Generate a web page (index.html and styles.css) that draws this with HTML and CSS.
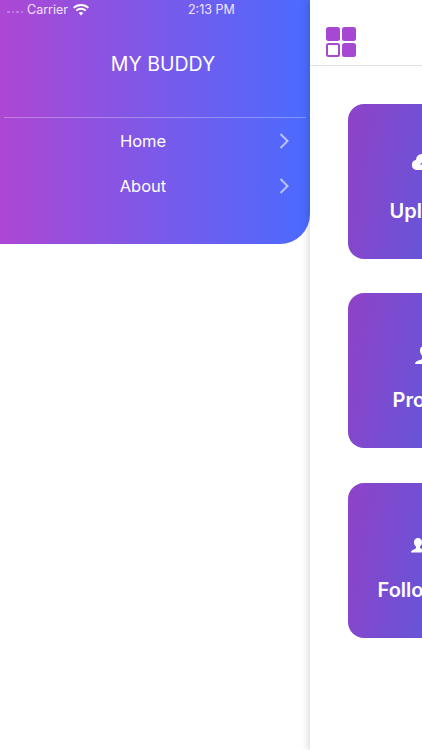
FILE: index.html
```html
<!DOCTYPE html>
<html lang="en">
<head>
<meta charset="utf-8">
<title>My Buddy</title>
<link rel="stylesheet" href="styles.css">
</head>
<body>
<div class="screen">
  <aside class="drawer">
    <div class="menu">
      <div class="status">
        <span class="signal"><i></i><i></i><i></i><i></i></span>
        <span class="carrier">Carrier</span>
        <svg class="wifi" width="16" height="12" viewBox="0 0 16 12"><path fill="#fff" d="M8 11.600 5.700 9.100a3.300 3.300 0 0 1 4.600 0zM3.900 7.300 2.600 5.900a7.800 7.800 0 0 1 10.800 0l-1.300 1.400a5.900 5.900 0 0 0-8.200 0zM1.300 4.600 0 3.200a11.600 11.600 0 0 1 16 0l-1.300 1.400a9.700 9.700 0 0 0-13.400 0z"/></svg>
        <span class="time">2:13 PM</span>
      </div>
      <h1 class="brand">MY BUDDY</h1>
      <div class="rule"></div>
      <a class="item"><span>Home</span><svg class="chev" width="10" height="16" viewBox="0 0 10 16"><path d="M1.500 1 8.500 8l-7 7" fill="none" stroke="#fff" stroke-opacity=".6" stroke-width="2"/></svg></a>
      <a class="item"><span>About</span><svg class="chev" width="10" height="16" viewBox="0 0 10 16"><path d="M1.500 1 8.500 8l-7 7" fill="none" stroke="#fff" stroke-opacity=".6" stroke-width="2"/></svg></a>
    </div>
  </aside>
  <main class="panel">
    <header class="topbar">
      <svg width="32" height="32" viewBox="0 0 32 32">
        <rect x="1" y="1" width="14" height="14" rx="2.500" fill="#a748d2"/>
        <rect x="17" y="1" width="14" height="14" rx="2.500" fill="#a748d2"/>
        <rect x="2" y="18" width="12" height="12" rx="1.500" fill="#fff" stroke="#a748d2" stroke-width="2"/>
        <rect x="17" y="17" width="14" height="14" rx="2.500" fill="#a748d2"/>
      </svg>
    </header>
    <div class="cards">
      <section class="card">
        <svg class="icon" width="26" height="20" viewBox="0 0 26 20"><path fill="#fff" fill-rule="evenodd" d="M5.500 16A5 5 0 0 1 5 6.100 6.500 6.500 0 0 1 17.500 3.800 6 6 0 0 1 20 16zM13 6l-4 4.500h3V14h2v-3.500h3z"/></svg>
        <h2>Upload</h2>
      </section>
      <section class="card">
        <svg class="icon" width="20" height="20" viewBox="0 -3 20 20"><path fill="#fff" d="M10 0c2.500 0 4 1.800 4 4.200 0 2.300-1 4.600-2.400 5.600v2.500c.6 2 7.400 1.700 7.400 5.700H1c0-4 6.800-3.700 7.400-5.700V9.800C7 8.800 6 6.500 6 4.200 6 1.800 7.500 0 10 0z"/></svg>
        <h2>Profile</h2>
      </section>
      <section class="card">
        <svg class="icon" width="26" height="20" viewBox="0 -3 26 20"><path fill="#fff" d="M7 2c2.500 0 4 1.700 4 4 0 2-.8 3.700-2 4.500V12c.8.700 2.600 1 3.500 1.800-1 .7-1.700 1.700-2 2.700H0c0-3 4.300-2.800 5-4.500v-1.500C3.800 9.700 3 8 3 6c0-2.300 1.500-4 4-4zM18 5c2 0 3.500 1.500 3.500 3.500 0 1.800-.7 3.200-1.700 4v1.300c.8 1.200 5.200 1 5.200 4.200H11c0-3.200 4.400-3 5.200-4.200v-1.300c-1-.8-1.700-2.200-1.700-4C14.500 6.500 16 5 18 5z"/></svg>
        <h2>Followers</h2>
      </section>
    </div>
  </main>
</div>
</body>
</html>
```
FILE: styles.css
```css
* { box-sizing: border-box; }
html, body { margin: 0; height: 100%; }
body { background: #fff; font-family: Inter, "Liberation Sans", sans-serif; overflow: hidden; }
.screen { display: flex; width: 422px; height: 750px; overflow: hidden; }
.drawer { flex: 0 0 310px; height: 750px; background: #fff; }
.menu {
  height: 244px;
  padding: 0 4px;
  color: #fff;
  background: linear-gradient(90deg, #ad47d3 0%, #4a6bff 100%);
  border-bottom-right-radius: 30px;
}
.status { position: relative; display: flex; align-items: center; height: 20px; font-size: 12.500px; color: #f1e4fa; }
.signal { display: flex; gap: 2px; margin: 4px 4px 0 3px; }
.signal i { width: 2.500px; height: 2.500px; border-radius: 50%; background: #fff; opacity: .35; }
.carrier { line-height: 20px; }
.wifi { margin-left: 5px; }
.time { position: absolute; left: 184px; top: 0; line-height: 20px; }
.brand { margin: 0; padding: 33px 0 0 16px; height: 97px; text-align: center; font-size: 19.500px; font-weight: 400; line-height: 22px; }
.rule { height: 1px; background: rgba(255,255,255,.3); }
.item { display: flex; align-items: center; justify-content: center; position: relative; height: 45px; padding-right: 24px; font-size: 16.500px; }
.chev { position: absolute; right: 17px; top: 15px; }
.panel { flex: 0 0 200px; height: 750px; box-shadow: -3px 0 6px rgba(0,0,0,.12); background: #fff; position: relative; }
.topbar { height: 66px; padding: 26px 0 0 15px; border-bottom: 1px solid #e2e2e4; }
.cards { display: flex; flex-direction: column; gap: 34.500px; padding: 37.800px 0 0 38px; }
.card {
  width: 152px;
  height: 155px;
  border-radius: 16px;
  background: linear-gradient(100deg, #8f42c8 0%, #4a62e4 100%);
  color: #fff;
  display: flex;
  flex-direction: column;
  align-items: center;
  padding-top: 50px;
}
.icon { display: block; overflow: visible; }
.card h2 { margin: 25px 0 0; font-size: 20px; font-weight: 600; line-height: 24px; white-space: nowrap; }
```
